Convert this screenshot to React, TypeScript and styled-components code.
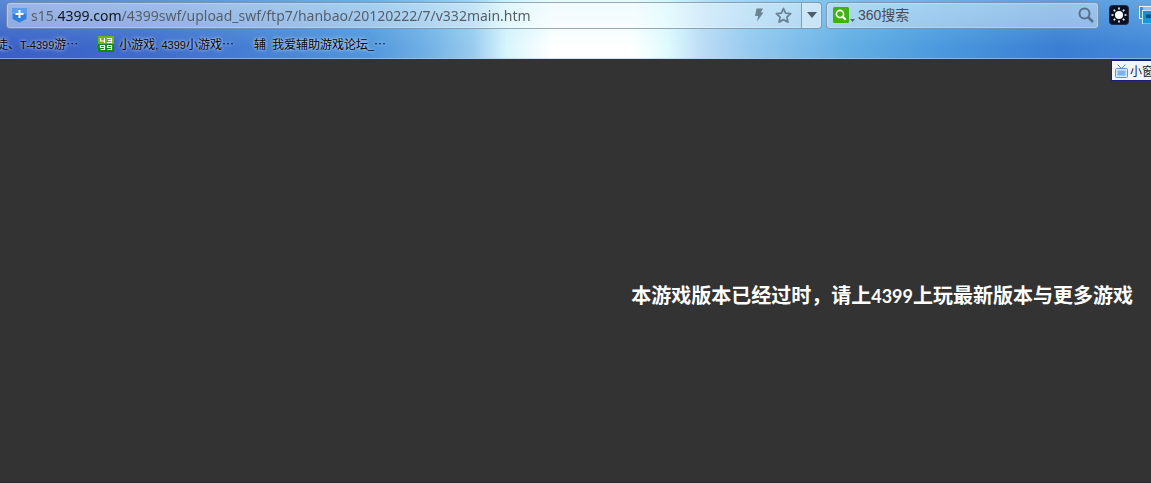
import React from "react";
import styled, { createGlobalStyle } from "styled-components";

const GlobalStyle = createGlobalStyle`
  *, *::before, *::after { box-sizing: border-box; }
  html, body { margin: 0; background: #333333; }
  body { overflow-x: hidden; font-family: "Liberation Sans", "Noto Sans CJK SC", sans-serif; }
  button, input { font: inherit; margin: 0; padding: 0; border: 0; background: none; }
  button { display: flex; align-items: center; justify-content: center; cursor: pointer; }
  svg { display: block; flex: none; }
`;

const Window = styled.div`
  display: flex;
  flex-direction: column;
  min-height: 100vh;
`;

const Chrome = styled.header`
  padding-top: 1px;
  border-bottom: 1px solid #33343f;
  box-shadow: inset 0 -1px 0 rgba(170, 205, 240, 0.6);
  background:
    linear-gradient(180deg, rgba(170, 235, 250, 0.3), rgba(170, 235, 250, 0) 80%),
    linear-gradient(
      90deg,
      #3a5fc6 0%,
      #3f6ccc 13%,
      #4782d4 23%,
      #5096dc 32%,
      #70b0e5 37%,
      #98caee 41%,
      #d8f5fc 44%,
      #ffffff 48%,
      #ffffff 55%,
      #e0fbfd 58%,
      #bddcf5 61%,
      #98caef 65%,
      #62ade3 74%,
      #4a98dd 82%,
      #3a7ed3 92%,
      #4288d8 100%
    );
`;

const Toolbar = styled.div`
  display: flex;
  align-items: center;
  height: 28px;
  padding-left: 6px;
`;

const Field = styled.form<{ $width?: number }>`
  display: flex;
  align-items: center;
  flex: ${(p) => (p.$width ? `0 0 ${p.$width}px` : "1 1 auto")};
  min-width: 0;
  height: 27px;
  overflow: hidden;
  border: 1px solid rgba(90, 110, 135, 0.6);
  border-radius: 4px;
  box-shadow: inset 0 0 0 1px rgba(255, 255, 255, 0.25);
  background: rgba(255, 255, 255, 0.4);
`;

const SiteButton = styled.button`
  width: 24px;
  height: 25px;
`;

const UrlInput = styled.input`
  flex: 1;
  min-width: 0;
  height: 25px;
  outline: none;
  font-family: "Noto Sans", sans-serif;
  font-size: 14px;
  color: transparent;
  caret-color: #222;
  background: linear-gradient(90deg, #555b66 26px, #10141c 26px, #10141c 91px, #555b66 91px);
  -webkit-background-clip: text;
  background-clip: text;
`;

const IconButton = styled.button`
  width: 24px;
  height: 25px;
`;

const DropButton = styled.button`
  width: 20px;
  height: 25px;
  margin-left: 6px;
  border-left: 1px solid rgba(80, 110, 140, 0.6);
  background: rgba(255, 255, 255, 0.3);
`;

const EngineButton = styled.button`
  width: 31px;
  height: 25px;
  padding-left: 2px;
`;

const SearchInput = styled.input`
  flex: 1;
  min-width: 0;
  height: 25px;
  outline: none;
  font-family: "Liberation Sans", "Noto Sans CJK SC", sans-serif;
  font-size: 14px;
  color: #4a4a52;
  &::placeholder { color: #4a4a52; opacity: 1; }
`;

const Gap = styled.div`
  flex: 0 0 4px;
`;

const Extensions = styled.div`
  display: flex;
  flex: 0 0 52px;
  gap: 10px;
  padding-left: 10px;
  overflow: hidden;
`;

const ExtensionButton = styled.button`
  flex: 0 0 20px;
  height: 20px;
`;

const Bookmarks = styled.nav`
  display: flex;
  align-items: center;
  gap: 20px;
  height: 30px;
  margin-left: -4px;
`;

const Bookmark = styled.a`
  display: flex;
  align-items: center;
  gap: 5px;
  height: 20px;
  color: #050505;
  font-family: "Noto Sans CJK SC", sans-serif;
  font-size: 12px;
  line-height: 20px;
  white-space: nowrap;
  text-decoration: none;
  text-shadow: 0 0 3px rgba(255, 255, 255, 0.7), 0 0 5px rgba(255, 255, 255, 0.5);
`;

const Latin = styled.span`
  font-family: "Liberation Sans", sans-serif;
  font-size: 11px;
`;

const TextIcon = styled.span`
  width: 13px;
`;

const Page = styled.main`
  position: relative;
  flex: 1;
  padding: 221px 18px 24px;
  border-bottom: 1px solid #2b2529;
  background: #333333;
`;

const PopOut = styled.button`
  position: absolute;
  top: 0;
  right: 0;
  gap: 2px;
  width: 40px;
  height: 21px;
  padding-left: 3px;
  justify-content: flex-start;
  overflow: hidden;
  border: 1px solid #1b1b7c;
  border-right: 0;
  background: #f1f5fd;
  color: #222;
  font-family: "Noto Sans CJK SC", sans-serif;
  font-size: 12px;
  line-height: 18px;
  white-space: nowrap;
`;

const Message = styled.p`
  margin: 0;
  color: #ffffff;
  font-family: "Noto Sans CJK SC", sans-serif;
  font-size: 20px;
  font-weight: 700;
  line-height: 28px;
  text-align: right;
`;

const Digits = styled.span`
  font-family: Lato, sans-serif;
  font-size: 18px;
`;

const ShieldIcon = () => (
  <svg width="15" height="16" viewBox="0 0 15 16">
    <path d="M0.500 1h14v11l-7 3.500-7-3.500z" fill="#2e7fe0" />
    <path d="M0.500 1h14v6h-14z" fill="#5b9df0" />
    <path d="M7.500 3v8M3.500 7h8" stroke="#fff" strokeWidth="2" />
  </svg>
);

const BoltIcon = () => (
  <svg width="10" height="14" viewBox="0 0 10 14">
    <path d="M2.500 0.500H9L6.800 4.500H9.500L3 13.500L4.200 8H1z" fill="#6d8294" />
  </svg>
);

const StarIcon = () => (
  <svg width="17" height="17" viewBox="0 0 17 17">
    <path
      d="M8.500 1.500l2.100 4.600 5 .6-3.700 3.400 1 5-4.400-2.500-4.400 2.500 1-5L1.400 6.700l5-.6z"
      fill="none"
      stroke="#6d8294"
      strokeWidth="1.800"
      strokeLinejoin="round"
    />
  </svg>
);

const CaretIcon = () => (
  <svg width="10" height="6" viewBox="0 0 10 6">
    <path d="M0 0h10L5 6z" fill="#4d5c68" />
  </svg>
);

const EngineIcon = () => (
  <svg width="22" height="16" viewBox="0 0 22 16">
    <rect width="16" height="16" rx="1.500" fill="#3fb40f" />
    <circle cx="7" cy="7" r="3.600" fill="none" stroke="#fff" strokeWidth="1.600" />
    <path d="M9.500 9.500l3.200 3.200" stroke="#fff" strokeWidth="2.200" />
    <path d="M17 12h5l-2.500 3z" fill="#4d6c80" />
  </svg>
);

const SearchIcon = () => (
  <svg width="16" height="16" viewBox="0 0 16 16">
    <circle cx="6.500" cy="6.500" r="5" fill="none" stroke="#56718f" strokeWidth="2" />
    <path d="M10 10l5 5" stroke="#56718f" strokeWidth="2.600" />
  </svg>
);

const SunIcon = () => (
  <svg width="20" height="20" viewBox="0 0 20 20">
    <rect x="0.500" y="0.500" width="19" height="19" rx="3" fill="#0b1020" stroke="#1d2b4a" />
    <circle cx="10" cy="10" r="4" fill="#fff" />
    <path
      d="M10 2.500v2M10 15.500v2M2.500 10h2M15.500 10h2M4.700 4.700l1.400 1.400M13.900 13.900l1.400 1.400M4.700 15.300l1.400-1.400M13.900 6.100l1.400-1.400"
      stroke="#fff"
      strokeWidth="1.600"
    />
  </svg>
);

const WindowsIcon = () => (
  <svg width="20" height="20" viewBox="0 0 20 20">
    <rect x="0.500" y="1.500" width="17" height="12" fill="#8cc6e6" stroke="#e8f6fd" />
    <path d="M1 13V2h3v11z" fill="#3b8fc4" />
    <rect x="3.500" y="5.500" width="16" height="13" fill="#1690d6" stroke="#c4e6f6" />
    <path d="M7 13V9.500h13V13z" fill="#0a4f8c" />
    <path d="M4 13.500h16v5H4z" fill="#129ade" />
  </svg>
);

const Logo4399 = () => (
  <svg width="16" height="16" viewBox="0 0 16 16">
    <rect width="16" height="8" fill="#6fb50f" />
    <rect y="8" width="16" height="8" fill="#168612" />
    <path
      d="M2.500 2v3h4M6.500 2v5M9 2.500h4.500v4H9M10 4.500h3.500M6.500 11.500h-4v-2h4v4h-4M13.500 11.500h-4v-2h4v4h-4"
      fill="none"
      stroke="#fff"
      strokeWidth="1.200"
    />
  </svg>
);

const TvIcon = () => (
  <svg width="13" height="14" viewBox="0 0 13 14">
    <path d="M2.500 0.500l4 4 4-4" fill="none" stroke="#4b86c6" />
    <rect x="0.500" y="4.500" width="12" height="9" rx="1" fill="#d5e8fb" stroke="#5a94d2" />
    <rect x="2.500" y="6.500" width="8" height="5" fill="#7db2ec" />
  </svg>
);

export default function App() {
  return (
    <Window lang="zh-CN">
      <GlobalStyle />
      <Chrome>
        <Toolbar>
          <Field onSubmit={(e) => e.preventDefault()}>
            <SiteButton type="button" aria-label="网站信息"><ShieldIcon /></SiteButton>
            <UrlInput
              aria-label="地址栏"
              spellCheck={false}
              defaultValue="s15.4399.com/4399swf/upload_swf/ftp7/hanbao/20120222/7/v332main.htm"
            />
            <IconButton type="button" aria-label="极速模式"><BoltIcon /></IconButton>
            <IconButton type="button" aria-label="收藏"><StarIcon /></IconButton>
            <DropButton type="button" aria-label="历史记录"><CaretIcon /></DropButton>
          </Field>
          <Gap />
          <Field $width={273} onSubmit={(e) => e.preventDefault()}>
            <EngineButton type="button" aria-label="选择搜索引擎"><EngineIcon /></EngineButton>
            <SearchInput aria-label="搜索" placeholder="360搜索" />
            <IconButton type="submit" aria-label="开始搜索"><SearchIcon /></IconButton>
          </Field>
          <Extensions>
            <ExtensionButton type="button" aria-label="夜间模式"><SunIcon /></ExtensionButton>
            <ExtensionButton type="button" aria-label="窗口"><WindowsIcon /></ExtensionButton>
          </Extensions>
        </Toolbar>
        <Bookmarks aria-label="书签">
          <Bookmark href="#t4399">
            <span>徒、<Latin>T-4399</Latin>游…</span>
          </Bookmark>
          <Bookmark href="#4399">
            <Logo4399 />
            <span>小游戏<Latin>, 4399</Latin>小游戏…</span>
          </Bookmark>
          <Bookmark href="#forum">
            <TextIcon>辅</TextIcon>
            <span>我爱辅助游戏论坛<Latin>_</Latin>…</span>
          </Bookmark>
        </Bookmarks>
      </Chrome>
      <Page>
        <PopOut type="button"><TvIcon />小窗</PopOut>
        <Message>
          本游戏版本已经过时，请上<Digits>4399</Digits>上玩最新版本与更多游戏
        </Message>
      </Page>
    </Window>
  );
}
